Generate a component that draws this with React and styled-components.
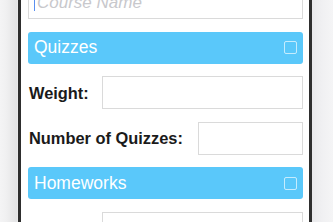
import React from "react";
import styled, { createGlobalStyle } from "styled-components";

const GlobalStyle = createGlobalStyle`
  html, body {
    margin: 0;
    padding: 0;
    overflow: hidden;
    height: 222px;
    background: #f0f0f1;
  }
  body {
    font-family: "Liberation Sans", Arial, sans-serif;
  }
`;

const Page = styled.div`
  display: flex;
  height: 222px;
  background: linear-gradient(
    to right,
    #f4f4f5 0,
    #f0f0f1 6px,
    #e3e3e4 17px,
    transparent 18px,
    transparent 312px,
    #e9e9eb 312px,
    #f0f0f2 322px,
    #f5f5f6 333px
  );
`;

const Phone = styled.div`
  box-sizing: border-box;
  margin-left: 18px;
  width: 294px;
  height: 222px;
  border-left: 3px solid #2e2e2e;
  border-right: 3px solid #2e2e2e;
  background: #fff;
  overflow: hidden;
  padding: 0 6px 0 7px;
`;

const Form = styled.div`
  display: flex;
  flex-direction: column;
  gap: 12.5px;
  margin-top: -14px;
`;

const TextBox = styled.div`
  box-sizing: border-box;
  flex: none;
  height: 33px;
  width: ${(p) => p.width || "100%"};
  border: 1px solid #dadada;
  background: #fff;
  display: flex;
  align-items: center;
  padding-left: 5px;
`;

const Placeholder = styled.span`
  font-style: italic;
  font-size: 17px;
  color: #c8c8cc;
  padding-left: 2px;
  border-left: 1px solid #5a8ff0;
  line-height: 17px;
`;

const Section = styled.div`
  height: 32px;
  border-radius: 3px;
  background: #5ac8fa;
  display: flex;
  align-items: center;
  justify-content: space-between;
  padding: 0 6px;
`;

const SectionTitle = styled.span`
  color: #fff;
  font-size: 17.5px;
`;

const Check = styled.span`
  box-sizing: border-box;
  width: 13px;
  height: 13px;
  border: 1.5px solid rgba(255, 255, 255, 0.65);
  border-radius: 2px;
`;

const Row = styled.div`
  display: flex;
  height: 33px;
  align-items: center;
  justify-content: space-between;
  padding-left: 1px;
`;

const Label = styled.span`
  font-size: 16.4px;
  line-height: 20px;
  font-weight: bold;
  color: #1a1a1a;
`;

const quizFields = [
  { label: "Weight:", width: "201px" },
  { label: "Number of Quizzes:", width: "105px" },
];

export default function App() {
  return (
    <>
      <GlobalStyle />
      <Page>
        <Phone>
          <Form>
            <TextBox>
              <Placeholder>Course Name</Placeholder>
            </TextBox>
            <Section>
              <SectionTitle>Quizzes</SectionTitle>
              <Check />
            </Section>
            {quizFields.map((f) => (
              <Row key={f.label}>
                <Label>{f.label}</Label>
                <TextBox width={f.width} />
              </Row>
            ))}
            <Section>
              <SectionTitle>Homeworks</SectionTitle>
              <Check />
            </Section>
            <Row>
              <Label>Weight:</Label>
              <TextBox width="201px" />
            </Row>
          </Form>
        </Phone>
      </Page>
    </>
  );
}
